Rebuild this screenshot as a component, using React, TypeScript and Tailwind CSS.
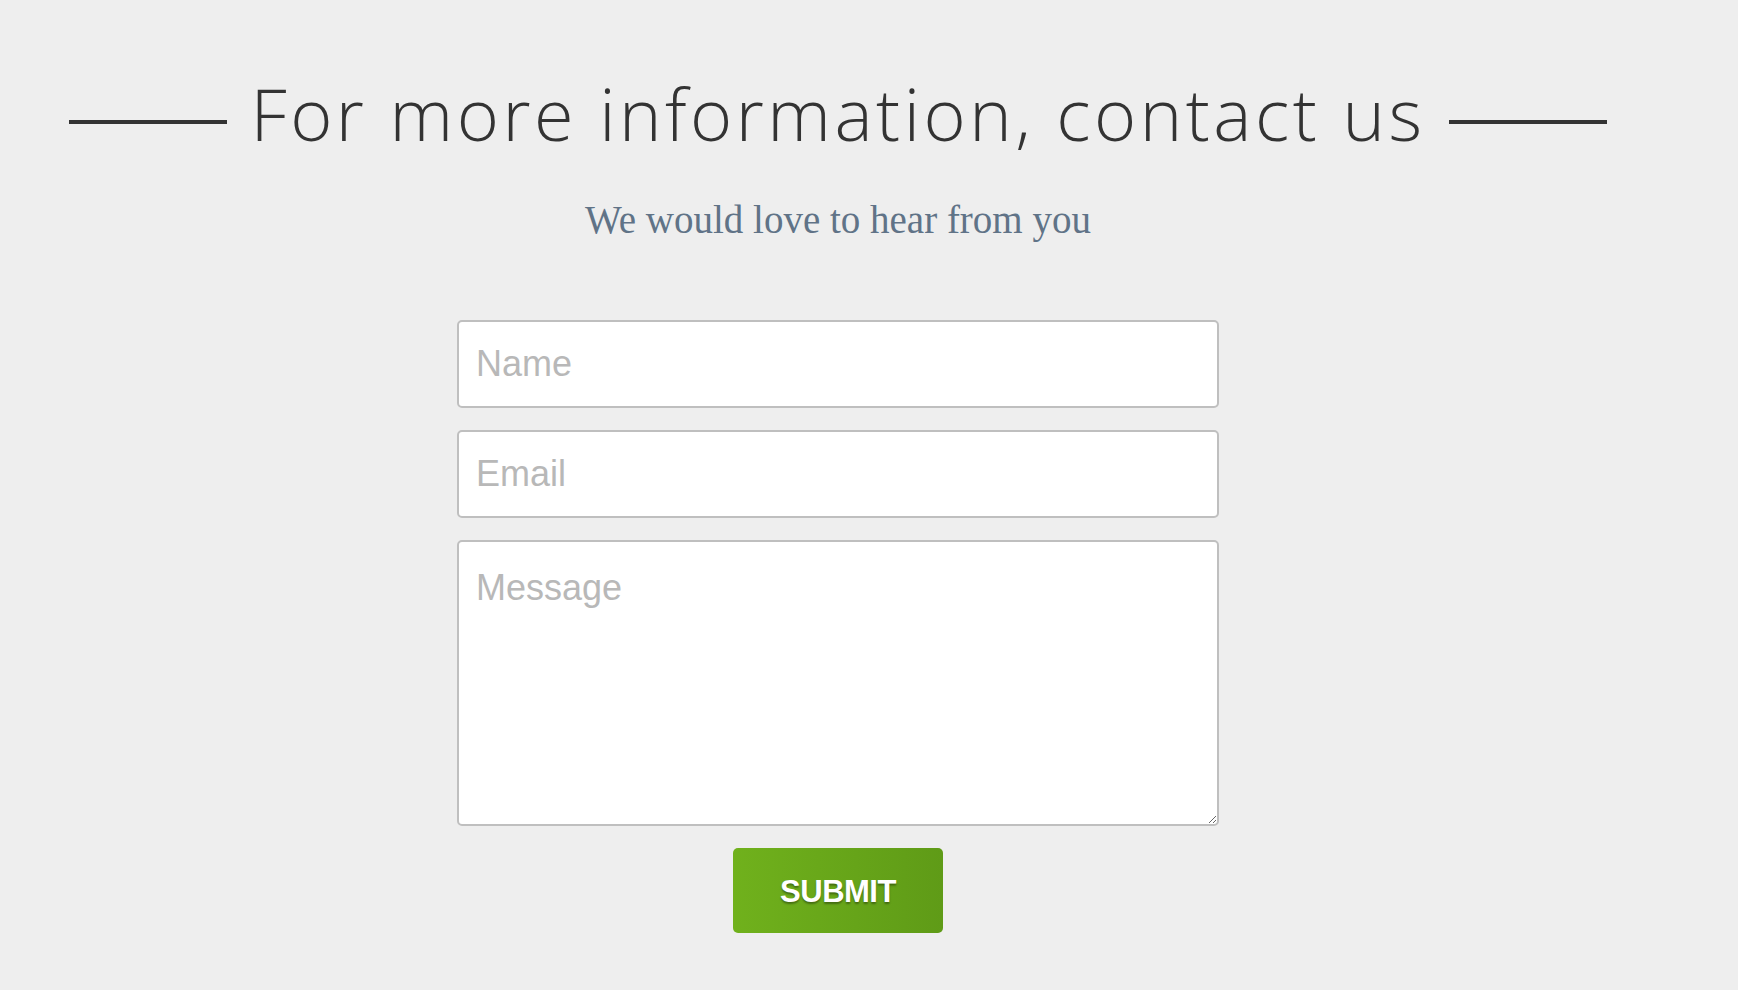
export default function App() {
  return (
    <div className="min-h-[990px] w-full bg-[#eeeeee]">
      <div className="flex w-[1676px] flex-col items-center">
        <div className="flex w-full items-center gap-[23px] px-[69px] pt-[76px]">
          <div className="mt-[18px] h-[4px] flex-1 bg-[#333333]" />
          <h1 className="whitespace-nowrap font-['Open_Sans',sans-serif] text-[72px] leading-[74px] font-light tracking-[3.5px] text-[#333333]">
            For more information, contact us
          </h1>
          <div className="mt-[18px] h-[4px] flex-1 bg-[#333333]" />
        </div>

        <p className="mt-[50px] font-['Liberation_Serif',serif] text-[39px] leading-none text-[#607387]">
          We would love to hear from you
        </p>

        <form className="mt-[81px] flex w-[762px] flex-col items-center gap-[22px]">
          <input
            type="text"
            placeholder="Name"
            className="h-[88px] w-full rounded-[5px] border-2 border-[#bfbfbf] bg-white px-[17px] font-['Liberation_Sans',sans-serif] text-[36px] outline-none placeholder:text-[#b8b8b8]"
          />
          <input
            type="email"
            placeholder="Email"
            className="h-[88px] w-full rounded-[5px] border-2 border-[#bfbfbf] bg-white px-[17px] font-['Liberation_Sans',sans-serif] text-[36px] outline-none placeholder:text-[#b8b8b8]"
          />
          <textarea
            placeholder="Message"
            className="h-[286px] w-full rounded-[5px] border-2 border-[#bfbfbf] bg-white px-[17px] pt-[26px] pb-[17px] font-['Liberation_Sans',sans-serif] text-[36px] leading-[40px] outline-none placeholder:text-[#b8b8b8]"
          />
          <button
            type="button"
            className="h-[85px] w-[210px] rounded-[5px] bg-gradient-to-r from-[#70b11c] to-[#5f9b17] pt-[4px] font-['Liberation_Sans',sans-serif] text-[31px] font-bold tracking-[-0.5px] text-white [text-shadow:0_2px_2px_rgba(0,0,0,0.35)]"
          >
            SUBMIT
          </button>
        </form>
      </div>
    </div>
  );
}
